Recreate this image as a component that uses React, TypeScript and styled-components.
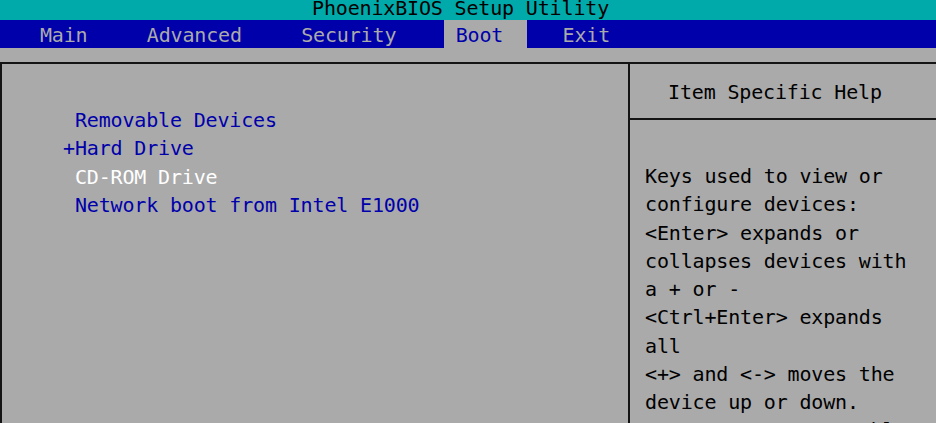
import React from "react";
import styled, { createGlobalStyle } from "styled-components";

const W = 11.88; // one text-mode column
const LINE = "#141414";

const GlobalStyle = createGlobalStyle`
  *, *::before, *::after { box-sizing: border-box; }
  html, body { margin: 0; padding: 0; background: #aaaaaa; overflow: hidden; }
`;

const Screen = styled.div`
  width: 936px;
  height: 423px;
  overflow: hidden;
  background: #aaaaaa;
  display: flex;
  flex-direction: column;
  font-family: "DejaVu Sans Mono", "Liberation Mono", monospace;
  font-size: 20px;
  letter-spacing: -0.16px;
  line-height: 28.25px;
  white-space: pre;
`;

const TitleBar = styled.header`
  flex: none;
  height: 20px;
  overflow: hidden;
  background: #00aaaa;
  color: #000000;
`;

const TitleText = styled.div`
  margin-top: -6px;
  padding-left: 312px;
`;

const MenuBar = styled.nav`
  flex: none;
  height: 28px;
  display: flex;
  gap: ${2 * W}px;
  padding-left: 28px;
  background: #0000aa;
`;

const MenuItem = styled.div<{ $active?: boolean }>`
  height: 28px;
  overflow: hidden;
  line-height: 31px;
  padding: 0 ${2 * W}px 0 ${W}px;
  background: ${(p) => (p.$active ? "#aaaaaa" : "transparent")};
  color: ${(p) => (p.$active ? "#0000aa" : "#aaaaaa")};
`;

const Body = styled.main`
  flex: 1;
  min-height: 0;
  display: flex;
  padding-top: 14px;
`;

const Frame = styled.div`
  flex: 1;
  display: flex;
  border-top: 2px solid ${LINE};
  border-left: 2px solid ${LINE};
`;

const LeftPane = styled.section`
  flex: none;
  width: 628px;
  border-right: 2px solid ${LINE};
  padding: 42px 0 0 61px;
`;

const BootItem = styled.div<{ $selected?: boolean }>`
  color: ${(p) => (p.$selected ? "#ffffff" : "#0000aa")};
`;

const Marker = styled.span`
  display: inline-block;
  width: ${W}px;
`;

const HelpPane = styled.aside`
  flex: 1;
  display: flex;
  flex-direction: column;
  color: #000000;
`;

const HelpTitle = styled.div`
  flex: none;
  height: 56px;
  padding: 13.5px 0 0 38px;
  border-bottom: 2px solid ${LINE};
`;

const HelpBody = styled.div`
  padding: 42px 0 0 15px;
`;

const HelpLine = styled.div``;

const menu = ["Main", "Advanced", "Security", "Boot", "Exit"];

const bootItems: { label: string; marker?: string; selected?: boolean }[] = [
  { label: "Removable Devices" },
  { label: "Hard Drive", marker: "+" },
  { label: "CD-ROM Drive", selected: true },
  { label: "Network boot from Intel E1000" },
];

const helpLines = [
  "Keys used to view or",
  "configure devices:",
  "<Enter> expands or",
  "collapses devices with",
  "a + or -",
  "<Ctrl+Enter> expands",
  "all",
  "<+> and <-> moves the",
  "device up or down.",
  "<n> May move removable",
  "device between Hard",
];

export default function App() {
  return (
    <>
      <GlobalStyle />
      <Screen>
        <TitleBar>
          <TitleText>PhoenixBIOS Setup Utility</TitleText>
        </TitleBar>
        <MenuBar>
          {menu.map((m) => (
            <MenuItem key={m} $active={m === "Boot"}>
              {m}
            </MenuItem>
          ))}
        </MenuBar>
        <Body>
          <Frame>
            <LeftPane>
              {bootItems.map((b) => (
                <BootItem key={b.label} $selected={b.selected}>
                  <Marker>{b.marker ?? ""}</Marker>
                  {b.label}
                </BootItem>
              ))}
            </LeftPane>
            <HelpPane>
              <HelpTitle>Item Specific Help</HelpTitle>
              <HelpBody>
                {helpLines.map((l) => (
                  <HelpLine key={l}>{l}</HelpLine>
                ))}
              </HelpBody>
            </HelpPane>
          </Frame>
        </Body>
      </Screen>
    </>
  );
}
